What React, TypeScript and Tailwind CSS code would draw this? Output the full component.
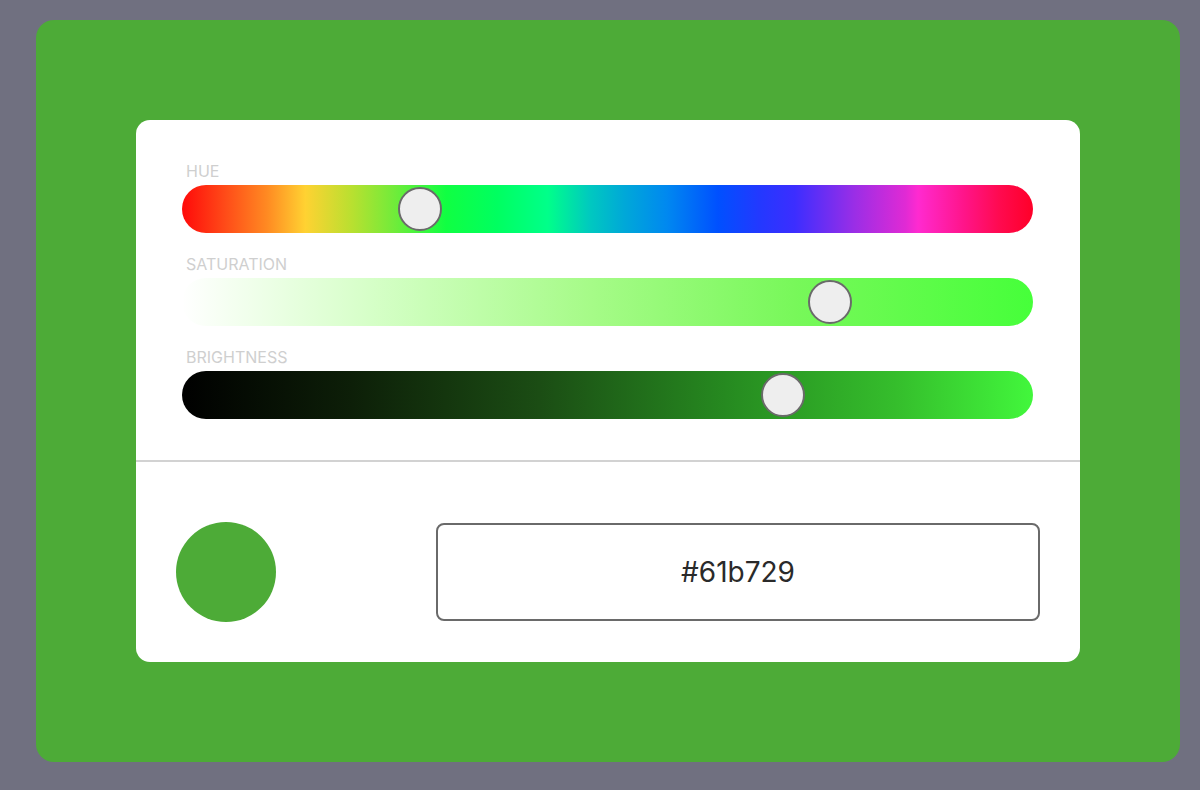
import React from "react";

const HEX = "#61b729";

// hex -> hue / saturation / value, each as a 0..1 fraction
const toHsv = (hex: string) => {
  const n = parseInt(hex.slice(1), 16);
  const r = ((n >> 16) & 255) / 255;
  const g = ((n >> 8) & 255) / 255;
  const b = (n & 255) / 255;
  const max = Math.max(r, g, b);
  const min = Math.min(r, g, b);
  const d = max - min;
  let h = 0;
  if (d) {
    if (max === r) h = ((g - b) / d) % 6;
    else if (max === g) h = (b - r) / d + 2;
    else h = (r - g) / d + 4;
    h = (h * 60 + 360) % 360;
  }
  return { h: h / 360, s: max ? d / max : 0, v: max };
};

const Slider = ({
  label,
  track,
  value,
}: {
  label: string;
  track: string;
  value: number;
}) => {
  return (
    <div className="flex flex-col">
      <span className="mb-1 pl-1 text-[16px] leading-5 text-[#cfcfcf]">{label}</span>
      <div className={`relative h-12 w-full rounded-full ${track}`}>
        {/* Thumb */}
        <div
          className="absolute top-1/2 h-11 w-11 -translate-y-1/2 rounded-full border-2 border-[#6a6a6a] bg-[#eeeeee]"
          style={{ left: `calc(${value} * (100% - 44px))` }}
        />
      </div>
    </div>
  );
};

export default function App() {
  const { h, s, v } = toHsv(HEX);

  return (
    <div className="flex h-screen w-full bg-[#707080] pb-7 pl-9 pr-5 pt-5 font-['Inter','Liberation_Sans',sans-serif]">
      <div className="flex flex-1 items-start rounded-[18px] bg-[#4dab37] p-[100px]">
        <div className="flex w-full flex-col overflow-hidden rounded-[14px] bg-white">
          {/* Sliders */}
          <div className="flex flex-col gap-[21px] pb-[41px] pl-[46px] pr-[47px] pt-[41px]">
            <Slider
              label="HUE"
              value={h}
              track="bg-[linear-gradient(to_right,#ff0a0a_0%,#ff4a18_5%,#ff8a22_10%,#ffd232_14.5%,#b8e030_20%,#70ec3a_25%,#10ff42_31%,#00ff60_37%,#00ff8a_43%,#00c8c0_48%,#00a8d8_52%,#0088f0_57%,#0050ff_63%,#2438ff_68%,#3c2eff_72%,#9a2ee6_79%,#e02ad4_85%,#ff2ad0_86.5%,#ff1488_92%,#ff0a50_96%,#ff0028_100%)]"
            />
            <Slider
              label="SATURATION"
              value={s}
              track="bg-[linear-gradient(to_right,#ffffff_0%,#d6ffc8_22%,#a6fb88_48%,#78f85a_72%,#46ff3a_100%)]"
            />
            <Slider
              label="BRIGHTNESS"
              value={v}
              track="bg-[linear-gradient(to_right,#000000_0%,#0d1f08_20%,#1b4d14_42%,#268a20_64%,#35be2c_84%,#42f73c_100%)]"
            />
          </div>

          <div className="h-[2px] w-full bg-[#d2d2d2]" />

          {/* Preview + hex value */}
          <div className="flex items-center justify-between px-10 pb-10 pt-[60px]">
            <div className="h-[100px] w-[100px] rounded-full bg-[#4dab37]" />
            <div className="flex h-[98px] w-[604px] items-center justify-center rounded-lg border-2 border-[#6a6a6a]">
              <span className="text-[28px] text-[#2a2a2a]">{HEX}</span>
            </div>
          </div>
        </div>
      </div>
    </div>
  );
}
